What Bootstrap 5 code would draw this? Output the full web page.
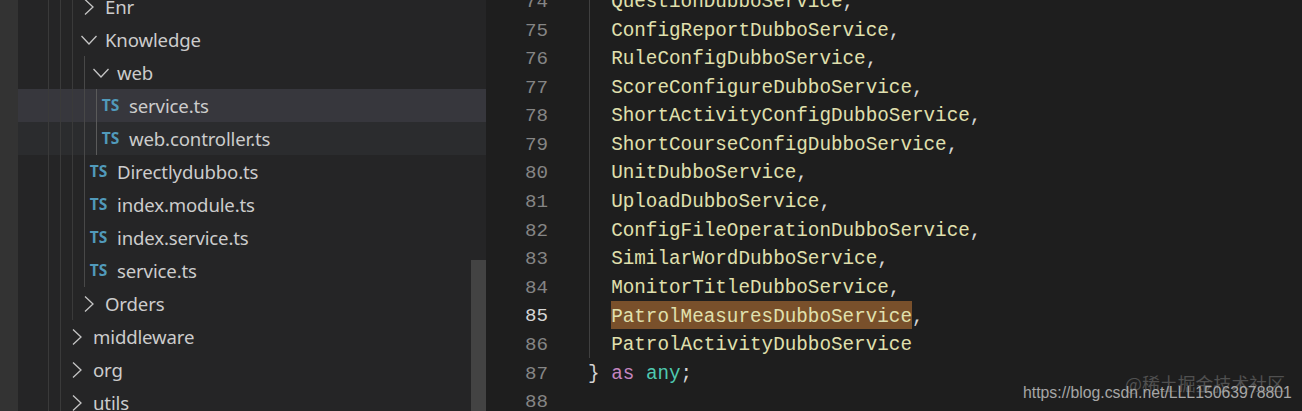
<!DOCTYPE html>
<html lang="en">
<head>
<meta charset="utf-8">
<title>Explorer and editor</title>
<link href="https://cdn.jsdelivr.net/npm/bootstrap@5.3.0/dist/css/bootstrap.min.css" rel="stylesheet">
<style>
html,body{height:411px;overflow:hidden;background:#1e1e1e}
.shot{width:1302px;height:411px;overflow:hidden;position:relative}
.actbar{width:18px;background:#333333;flex:none}
.sidebar{width:468px;background:#252526;flex:none;position:relative;overflow:hidden}
.tree{margin-top:-10px}
.tree-row{height:33px;color:#cccccc;font:18.6px/33px "Noto Sans",sans-serif;letter-spacing:-.15px;white-space:nowrap}
.tree-row.sel{background:#37373d}
.tree-row.hov{background:#2b2c2e}
.d0{padding-left:47px}.d1{padding-left:59px}.d2{padding-left:71px}.d3{padding-left:83px}
.slot{width:28px;flex:none;padding-right:4px;display:flex;justify-content:center;align-items:center;height:33px}
.slot svg{fill:none;stroke:#c5c5c5;stroke-width:1.3}
.ts{color:#519aba;font:700 15.5px/33px "Noto Sans",sans-serif;letter-spacing:0;margin-left:-5px;margin-top:-1px}
.guide{position:absolute;width:1px;background:#3a3a3a}
.g48{left:30px;top:0;height:411px}
.g60{left:42px;top:0;height:411px}
.g72{left:54px;top:0;height:320px}
.g84{left:66px;top:56px;height:231px;background:#484848}
.g96{left:78px;top:89px;height:66px;background:#5a5a5a}
.thumb{position:absolute;right:0;top:260px;width:15px;height:151px;background:#434343}
.editor{flex:1;background:#1e1e1e;position:relative;overflow:hidden}
.code{margin-top:-12px}
.code-line{height:28.58px;font:19.3px/29.6px "Liberation Mono",monospace;white-space:pre;color:#e0e0ae}
.num{width:62px;flex:none;text-align:right;color:#858585;font-size:19.2px}
.num.on{color:#d6d6d6}
.txt{margin-left:40px}
.hl{background:#79502b;display:inline-block;line-height:24.4px;padding-top:3.6px;margin-top:-1px}
.p{color:#d4d4d4}.kw{color:#c586c0}.ty{color:#4ec9b0}
.cguide{position:absolute;left:103px;top:0;width:1px;height:358px;background:#404040}
.wm-url{position:absolute;left:1023px;top:383px;font:15.8px/19px "Liberation Sans",sans-serif;color:#a6a6a6;white-space:nowrap}
.wm-cn{position:absolute;left:1125px;top:373px;font:17.9px/21px "Noto Sans CJK SC",sans-serif;color:#505050;white-space:nowrap}
</style>
</head>
<body>
<div class="shot d-flex">
  <div class="actbar"></div>
  <div class="sidebar">
    <div class="tree">
      <div class="tree-row d-flex d1"><span class="slot"><svg width="10" height="16" viewBox="0 0 10 16"><path d="M1 .5 9 8 1 15.5"/></svg></span><span>Enr</span></div>
      <div class="tree-row d-flex d1"><span class="slot"><svg width="16" height="10" viewBox="0 0 16 10"><path d="M.5 1 8 9 15.5 1"/></svg></span><span>Knowledge</span></div>
      <div class="tree-row d-flex d2"><span class="slot"><svg width="16" height="10" viewBox="0 0 16 10"><path d="M.5 1 8 9 15.5 1"/></svg></span><span>web</span></div>
      <div class="tree-row d-flex d3 sel"><span class="slot"><span class="ts">TS</span></span><span>service.ts</span></div>
      <div class="tree-row d-flex d3 hov"><span class="slot"><span class="ts">TS</span></span><span>web.controller.ts</span></div>
      <div class="tree-row d-flex d2"><span class="slot"><span class="ts">TS</span></span><span>Directlydubbo.ts</span></div>
      <div class="tree-row d-flex d2"><span class="slot"><span class="ts">TS</span></span><span>index.module.ts</span></div>
      <div class="tree-row d-flex d2"><span class="slot"><span class="ts">TS</span></span><span>index.service.ts</span></div>
      <div class="tree-row d-flex d2"><span class="slot"><span class="ts">TS</span></span><span>service.ts</span></div>
      <div class="tree-row d-flex d1"><span class="slot"><svg width="10" height="16" viewBox="0 0 10 16"><path d="M1 .5 9 8 1 15.5"/></svg></span><span>Orders</span></div>
      <div class="tree-row d-flex d0"><span class="slot"><svg width="10" height="16" viewBox="0 0 10 16"><path d="M1 .5 9 8 1 15.5"/></svg></span><span>middleware</span></div>
      <div class="tree-row d-flex d0"><span class="slot"><svg width="10" height="16" viewBox="0 0 10 16"><path d="M1 .5 9 8 1 15.5"/></svg></span><span>org</span></div>
      <div class="tree-row d-flex d0"><span class="slot"><svg width="10" height="16" viewBox="0 0 10 16"><path d="M1 .5 9 8 1 15.5"/></svg></span><span>utils</span></div>
    </div>
    <i class="guide g48"></i><i class="guide g60"></i><i class="guide g72"></i><i class="guide g84"></i><i class="guide g96"></i>
    <div class="thumb"></div>
  </div>
  <div class="editor">
    <div class="code">
      <div class="code-line d-flex"><span class="num">74</span><span class="txt">  QuestionDubboService<span class="p">,</span></span></div>
      <div class="code-line d-flex"><span class="num">75</span><span class="txt">  ConfigReportDubboService<span class="p">,</span></span></div>
      <div class="code-line d-flex"><span class="num">76</span><span class="txt">  RuleConfigDubboService<span class="p">,</span></span></div>
      <div class="code-line d-flex"><span class="num">77</span><span class="txt">  ScoreConfigureDubboService<span class="p">,</span></span></div>
      <div class="code-line d-flex"><span class="num">78</span><span class="txt">  ShortActivityConfigDubboService<span class="p">,</span></span></div>
      <div class="code-line d-flex"><span class="num">79</span><span class="txt">  ShortCourseConfigDubboService<span class="p">,</span></span></div>
      <div class="code-line d-flex"><span class="num">80</span><span class="txt">  UnitDubboService<span class="p">,</span></span></div>
      <div class="code-line d-flex"><span class="num">81</span><span class="txt">  UploadDubboService<span class="p">,</span></span></div>
      <div class="code-line d-flex"><span class="num">82</span><span class="txt">  ConfigFileOperationDubboService<span class="p">,</span></span></div>
      <div class="code-line d-flex"><span class="num">83</span><span class="txt">  SimilarWordDubboService<span class="p">,</span></span></div>
      <div class="code-line d-flex"><span class="num">84</span><span class="txt">  MonitorTitleDubboService<span class="p">,</span></span></div>
      <div class="code-line d-flex"><span class="num on">85</span><span class="txt">  <span class="hl">PatrolMeasuresDubboService</span><span class="p">,</span></span></div>
      <div class="code-line d-flex"><span class="num">86</span><span class="txt">  PatrolActivityDubboService</span></div>
      <div class="code-line d-flex"><span class="num">87</span><span class="txt"><span class="p">} </span><span class="kw">as</span> <span class="ty">any</span><span class="p">;</span></span></div>
      <div class="code-line d-flex"><span class="num">88</span><span class="txt"></span></div>
    </div>
    <i class="cguide"></i>
  </div>
  <span class="wm-cn">@稀土掘金技术社区</span>
  <span class="wm-url">https://blog.csdn.net/LLL15063978801</span>
</div>
<script src="https://cdn.jsdelivr.net/npm/bootstrap@5.3.0/dist/js/bootstrap.bundle.min.js"></script>
</body>
</html>
